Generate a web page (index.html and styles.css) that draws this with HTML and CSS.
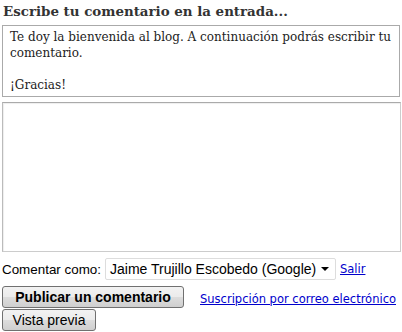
FILE: index.html
```html
<!DOCTYPE html>
<html lang="es">
<head>
    <meta charset="UTF-8">
    <title>Comentarios</title>
    <link rel="stylesheet" href="styles.css">
</head>
<body>
    <div class="comment-form">
        <h4 class="form-title">Escribe tu comentario en la entrada...</h4>
        <div class="form-message">
            <p>Te doy la bienvenida al blog. A continuación podrás escribir tu comentario.</p>
            <p>¡Gracias!</p>
        </div>
        <div class="form-body"></div>
        <div class="identity">
            <label>Comentar como:</label>
            <div class="select">
                <span>Jaime Trujillo Escobedo (Google)</span>
                <span class="arrow"></span>
            </div>
            <a href="#">Salir</a>
        </div>
        <div class="actions">
            <button class="btn publish">Publicar un comentario</button>
            <a href="#" class="subscribe">Suscripción por correo electrónico</a>
        </div>
        <button class="btn preview">Vista previa</button>
    </div>
</body>
</html>
```

FILE: styles.css
```css
body {
    margin: 0;
    background-color: #fff;
    font-family: 'DejaVu Serif', serif;
}
.comment-form {
    padding: 0 2px;
}
.form-title {
    margin: 0;
    padding: 2px 1px 0;
    font-size: 13.4px;
    font-weight: bold;
    color: #333;
    line-height: 18px;
}
.form-message {
    margin-top: 5px;
    border: 1px solid #aaa;
    padding: 3px 6px 3px 7px;
    font-size: 12px;
    line-height: 16px;
    color: #222;
}
.form-message p {
    margin: 0 0 16px;
}
.form-message p:last-child {
    margin: 0;
}
.form-body {
    margin-top: 5px;
    margin-right: -1px;
    height: 148px;
    border: 1px solid #ccc;
    border-top-color: #aaa;
    border-left-color: #bbb;
    box-shadow: inset 1px 1px 1px #eee;
}
.identity {
    display: flex;
    align-items: center;
    margin-top: 6px;
    font-family: 'Liberation Sans', Arial, sans-serif;
    font-size: 13.4px;
    color: #000;
}
.identity label {
    margin-right: 4px;
}
.select {
    display: flex;
    align-items: center;
    justify-content: space-between;
    width: 219px;
    height: 20px;
    padding: 0 6px 0 4px;
    border: 1px solid #ddd;
    border-radius: 2px;
    font-size: 14px;
}
.arrow {
    border-left: 4px solid transparent;
    border-right: 4px solid transparent;
    border-top: 4px solid #000;
}
.identity a, .subscribe {
    font-family: 'DejaVu Sans', Verdana, sans-serif;
    font-size: 11.5px;
    color: #00c;
    margin-left: 4px;
    white-space: nowrap;
}
.actions {
    display: flex;
    align-items: flex-end;
    margin-top: 6px;
}
.subscribe {
    margin-left: 16px;
    margin-bottom: 2px;
}
.btn {
    display: block;
    height: 22px;
    padding: 0 9px;
    border: 1px solid #707070;
    border-radius: 3px;
    background: linear-gradient(#f2f2f2 0%, #ebebeb 50%, #dddddd 50%, #cfcfcf 100%);
    font-family: 'Liberation Sans', Arial, sans-serif;
    font-size: 14px;
    color: #000;
}
.publish {
    width: 182px;
    font-weight: bold;
}
.preview {
    margin-top: 1px;
    width: 94px;
}
```
